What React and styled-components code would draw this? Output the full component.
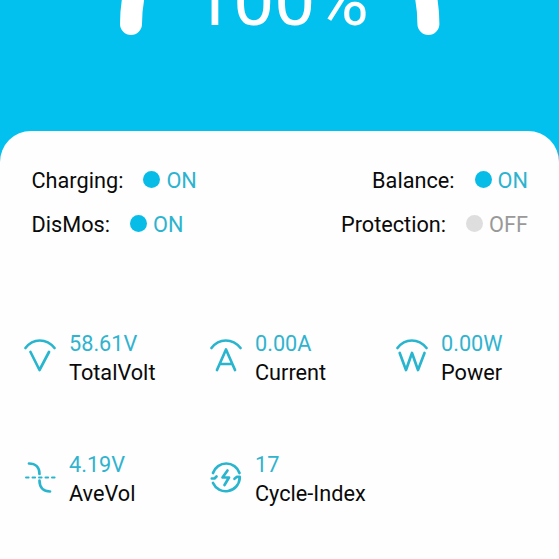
import styled, { createGlobalStyle } from "styled-components";

//#region Estilos
const GlobalStyle = createGlobalStyle`
  * {
    box-sizing: border-box;
  }
  body {
    margin: 0;
    background: #02c1ef;
    font-family: Roboto, "Liberation Sans", sans-serif;
  }
`;
const Screen = styled.div`
  width: 559px;
  height: 559px;
  overflow: hidden;
  display: flex;
  flex-direction: column;
  background: #02c1ef;
`;
const Header = styled.header`
  position: relative;
  flex: 0 0 131px;
  display: flex;
  justify-content: center;
`;
const GaugeArc = styled.svg`
  position: absolute;
  top: 0;
  left: 0;
`;
const Percent = styled.div`
  height: 84px;
  margin-top: -42px;
  padding-left: 2px;
  font-size: 73px;
  line-height: 84px;
  color: #fff;
`;
const Card = styled.main`
  flex: 1;
  padding: 27px 31px 0 24px;
  border-radius: 31px 31px 0 0;
  background: #fefefe;
`;
const StatusList = styled.section`
  display: flex;
  flex-direction: column;
  padding-left: 7.5px;
`;
const StatusRow = styled.div`
  display: flex;
  justify-content: space-between;
  height: 44px;
`;
const StatusItem = styled.div`
  display: flex;
  align-items: center;
  height: 44px;
  font-size: 21.7px;
  color: #0a0a0a;
`;
const Dot = styled.span`
  width: 17px;
  height: 17px;
  margin: -1px 6px 0 20px;
  border-radius: 50%;
  background: ${({ $on }) => ($on ? "#08bce8" : "#dedede")};
`;
const State = styled.span`
  color: ${({ $on }) => ($on ? "#2cb3cf" : "#999")};
`;
const MetricGrid = styled.section`
  display: grid;
  grid-template-columns: repeat(3, 186px);
  grid-auto-rows: 121px;
  margin-top: 83px;
`;
const Metric = styled.div`
  display: flex;
  align-items: flex-start;
`;
const MetricIcon = styled.svg`
  flex: none;
  width: 32px;
  height: 36px;
  margin: 9px 13px 0 0;
  fill: none;
  stroke: #2ab5cf;
  stroke-width: 2.7;
  stroke-linecap: round;
  stroke-linejoin: round;
`;
const Value = styled.div`
  font-size: 21.7px;
  line-height: 30px;
  color: #30b3cf;
`;
const Label = styled.div`
  margin-top: -1px;
  font-size: 21.7px;
  line-height: 30px;
  white-space: nowrap;
  color: #0a0a0a;
`;
//#endregion

//#region Iconos
const Arc = () => <path d="M1.5 10C9 0 22.5 0 30.5 10" />;
const icons = {
  volt: (
    <>
      <Arc />
      <path d="M6.5 14L15.5 32L25 14" />
    </>
  ),
  ampere: (
    <>
      <Arc />
      <path d="M7 32L16 11.5L25 32M10 26H22" />
    </>
  ),
  watt: (
    <>
      <Arc />
      <path d="M3.7 15L10 32L16 15L22 32L28.5 15" />
    </>
  ),
  average: (
    <>
      <path d="M5 4.5C11.5 4.5 15.5 8.5 15.5 15M15.5 21.5C15.5 28.5 19.5 32.5 26 32.5" />
      <path d="M2 18.5H31" strokeWidth="2" strokeDasharray="2.6 3.9" />
    </>
  ),
  cycle: (
    <>
      <path d="M3 14A14 14 0 0 1 29.5 14M29.7 19.5A14 14 0 0 1 3 24" />
      <path d="M1.8 19.5H4.5L6.5 17.5M29.7 19.5V17.8H27L24.5 19.8" />
      <path d="M17.5 11.5L12.5 18.5H19L14.5 26" />
    </>
  ),
};
//#endregion

//#region Datos
const status = [
  [
    { name: "Charging", on: true },
    { name: "Balance", on: true },
  ],
  [
    { name: "DisMos", on: true },
    { name: "Protection", on: false },
  ],
];
const metrics = [
  { icon: "volt", value: "58.61V", label: "TotalVolt" },
  { icon: "ampere", value: "0.00A", label: "Current" },
  { icon: "watt", value: "0.00W", label: "Power" },
  { icon: "average", value: "4.19V", label: "AveVol" },
  { icon: "cycle", value: "17", label: "Cycle-Index" },
];
//#endregion

const App = () => {
  //#region Render
  return (
    <>
      <GlobalStyle />
      <Screen>
        <Header>
          <GaugeArc width="559" height="131" viewBox="0 0 559 131">
            <path
              d="M131 24A148.7 148.7 0 0 1 428.4 24"
              fill="none"
              stroke="#fff"
              strokeWidth="22"
              strokeLinecap="round"
            />
          </GaugeArc>
          <Percent>100%</Percent>
        </Header>
        <Card>
          <StatusList>
            {status.map((row) => (
              <StatusRow key={row[0].name}>
                {row.map(({ name, on }) => (
                  <StatusItem key={name}>
                    {name}:
                    <Dot $on={on} />
                    <State $on={on}>{on ? "ON" : "OFF"}</State>
                  </StatusItem>
                ))}
              </StatusRow>
            ))}
          </StatusList>
          <MetricGrid>
            {metrics.map(({ icon, value, label }) => (
              <Metric key={label}>
                <MetricIcon viewBox="0 0 32 36">{icons[icon]}</MetricIcon>
                <div>
                  <Value>{value}</Value>
                  <Label>{label}</Label>
                </div>
              </Metric>
            ))}
          </MetricGrid>
        </Card>
      </Screen>
    </>
  );
  //#endregion
};

export default App;
